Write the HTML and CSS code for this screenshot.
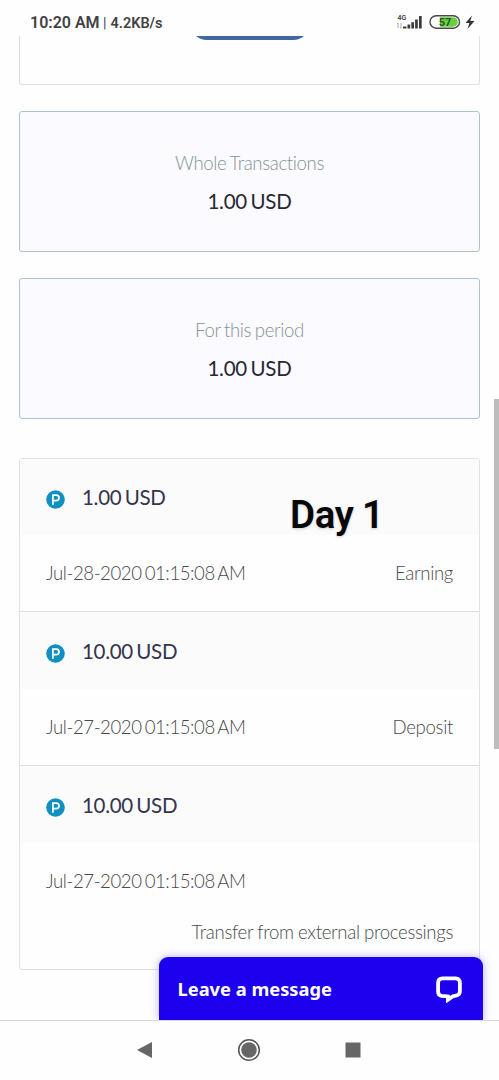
FILE: index.html
```
<!DOCTYPE html>
<html lang="en">
<head>
<meta charset="utf-8">
<title>Transactions</title>
<link rel="stylesheet" href="styles.css">
</head>
<body>
<div class="phone">
  <header class="status">
    <div class="status-left"><span class="clock">10:20 AM</span><span class="bar">|</span><span class="speed">4.2KB/s</span></div>
    <svg class="status-icons" width="80" height="20" viewBox="0 0 80 20">
      <text x="0.500" y="7.500" class="net">4G</text>
      <path d="M1 11v5M0 12l1-1.500M4 11v5M3 15l1 1.500" stroke="#aaa" fill="none" stroke-width="1"/>
      <path d="M6 14.500h3.500v2H6zM10.500 12.500h2.700v4h-2.700zM14.300 10.200H17v6.300h-2.700zM18.100 7.500h2.700v9h-2.700zM22 4h2.700v12.500H22z" fill="#3c3c3c"/>
      <rect x="33" y="3.700" width="29.500" height="12.500" rx="6.250" fill="#fff" stroke="#484848" stroke-width="1.400"/>
      <path d="M43 5.200H56a4.750 4.750 0 0 1 0 9.500H43z" fill="#68cf45"/>
      <text x="48" y="13.500" class="charge">57</text>
      <path d="M75 3.500L68.500 11h3.900L70.500 17l7-8h-4.200z" fill="#333"/>
    </svg>
  </header>
  <main class="page">
    <section class="panel"><div class="button-edge"></div></section>
    <section class="stat"><h2>Whole Transactions</h2><p>1.00 USD</p></section>
    <section class="stat"><h2>For this period</h2><p>1.00 USD</p></section>
    <section class="list">
      <article class="item">
        <div class="item-head"><svg class="coin" viewBox="0 0 20 20"><circle cx="10" cy="10" r="9.800"/><path d="M7.300 15.500V5.300h3.500a2.900 2.900 0 0 1 0 5.800H7.300"/></svg><span>1.00 USD</span></div>
        <div class="item-body"><time>Jul-28-2020 01:15:08 AM</time><span class="kind">Earning</span></div>
      </article>
      <article class="item">
        <div class="item-head"><svg class="coin" viewBox="0 0 20 20"><circle cx="10" cy="10" r="9.800"/><path d="M7.300 15.500V5.300h3.500a2.900 2.900 0 0 1 0 5.800H7.300"/></svg><span>10.00 USD</span></div>
        <div class="item-body"><time>Jul-27-2020 01:15:08 AM</time><span class="kind">Deposit</span></div>
      </article>
      <article class="item">
        <div class="item-head"><svg class="coin" viewBox="0 0 20 20"><circle cx="10" cy="10" r="9.800"/><path d="M7.300 15.500V5.300h3.500a2.900 2.900 0 0 1 0 5.800H7.300"/></svg><span>10.00 USD</span></div>
        <div class="item-body tall"><time>Jul-27-2020 01:15:08 AM</time><span class="kind">Transfer from external processings</span></div>
      </article>
    </section>
    <div class="caption">Day 1</div>
    <div class="scroll"></div>
    <div class="chat"><span>Leave a message</span>
      <svg width="28" height="28" viewBox="0 0 28 28"><path d="M7.500 3.400H20.500Q24.900 3.600 24.900 8V16Q24.900 19.500 22 20.300L18 21.200L12.900 24.800V21.400L6.500 20.800Q3.100 20.300 3.100 16.500V8Q3.100 3.600 7.500 3.400Z" fill="none" stroke="#fff" stroke-width="3.800"/></svg>
    </div>
  </main>
  <nav class="nav">
    <svg width="16" height="18" viewBox="0 0 16 18"><path d="M0 9L15 1v16z"/></svg>
    <svg width="24" height="24" viewBox="0 0 24 24"><circle cx="12" cy="12" r="10.300" class="ring"/><circle cx="12" cy="12" r="7.800"/></svg>
    <svg width="16" height="16" viewBox="0 0 16 16"><path d="M.500.500h15v15h-15z"/></svg>
  </nav>
</div>
</body>
</html>
```
FILE: styles.css
```
* { box-sizing: border-box; }
body { margin: 0; background: #fff; font-family: Lato, sans-serif; }
.phone { width: 499px; height: 1080px; display: flex; flex-direction: column; overflow: hidden; background: #fefefe; }
.status { height: 36px; flex: none; display: flex; justify-content: space-between; padding: 12px 19px 0 30px; font-family: Roboto, sans-serif; color: #424242; }
.status-left { display: flex; align-items: baseline; font-weight: 600; line-height: 21px; white-space: nowrap; }
.clock { font-size: 16px; width: 73px; }
.bar { font-size: 14px; font-weight: 400; width: 7.500px; }
.speed { font-size: 14.500px; }
.status-icons { margin-right: 3px; }
.net { font: 600 7px Roboto, sans-serif; fill: #444; }
.charge { font: 700 11px Roboto, sans-serif; fill: #245b18; text-anchor: middle; }
.page { position: relative; height: 984px; flex: none; padding: 0 19px; overflow: hidden; }
.panel { height: 49px; border: 1px solid #dedfe1; border-top: 0; border-radius: 0 0 3px 3px; margin-bottom: 26px; overflow: hidden; }
.button-edge { width: 120px; height: 34px; margin: -30px auto 0; border-radius: 17px; background: #3f67a0; }
.stat { height: 141px; margin-bottom: 26px; padding-top: 39px; border: 1px solid #aac5cf; border-radius: 3px; background: #fafaff; text-align: center; }
.stat h2 { margin: 0; font-size: 18.600px; line-height: 24px; font-weight: 300; letter-spacing: -.36px; word-spacing: -1px; color: #839493; }
.stat p { margin: 12px 0 0; font-size: 20.500px; line-height: 28px; letter-spacing: -.25px; word-spacing: -1.500px; color: #292735; }
.list { height: 512px; margin-top: 39px; border: 1px solid #e2e2e3; border-radius: 3px; }
.item { border-bottom: 1px solid #dedede; }
.item:last-child { border: 0; }
.item-head { display: flex; align-items: center; height: 76px; padding: 0 26px; background: #fbfbfc; font-size: 20.500px; letter-spacing: -.3px; word-spacing: -1.500px; color: #34344a; }
.item + .item .item-head { height: 77px; padding-top: 1px; }
.item-head span { margin-left: 17px; }
.coin { width: 19px; height: 19px; position: relative; top: 2px; }
.coin circle { fill: #108fc0; }
.coin path { fill: none; stroke: #fff; stroke-width: 1.800; }
.item-body { display: flex; flex-wrap: wrap; justify-content: space-between; height: 76px; padding: 26px 26px 0; font-size: 18.600px; font-weight: 300; line-height: 24px; letter-spacing: -.33px; word-spacing: -.300px; color: #49494c; white-space: nowrap; }
.item-body time { letter-spacing: -.43px; word-spacing: -1.500px; }
.tall .kind { width: 100%; text-align: right; margin-top: 27px; }
.item-body.tall { height: 126px; align-content: flex-start; }
.caption { position: absolute; left: 290px; top: 455px; font: 600 38.500px/48px Roboto, sans-serif; letter-spacing: -.3px; word-spacing: -1px; color: #080808; white-space: nowrap; text-shadow: 0 1px 3px #ccc; }
.scroll { position: absolute; right: 0; top: 363px; width: 5px; height: 350px; background: #bdbdbd; }
.chat { position: absolute; left: 159px; bottom: 0; width: 324px; height: 63px; display: flex; align-items: center; justify-content: space-between; padding: 0 20px 0 18.500px; border-radius: 9px 9px 0 0; background: #1c00ee; color: #fff; font: 700 18.300px "Noto Sans", sans-serif; box-shadow: 0 0 9px #6655dd77; white-space: nowrap; }
.nav { height: 60px; flex: none; border-top: 1px solid #dadada; display: flex; align-items: center; justify-content: space-between; padding: 0 138px 1px 137px; fill: #666; }
.ring { fill: none; stroke: #555; stroke-width: 1.500; }
```
